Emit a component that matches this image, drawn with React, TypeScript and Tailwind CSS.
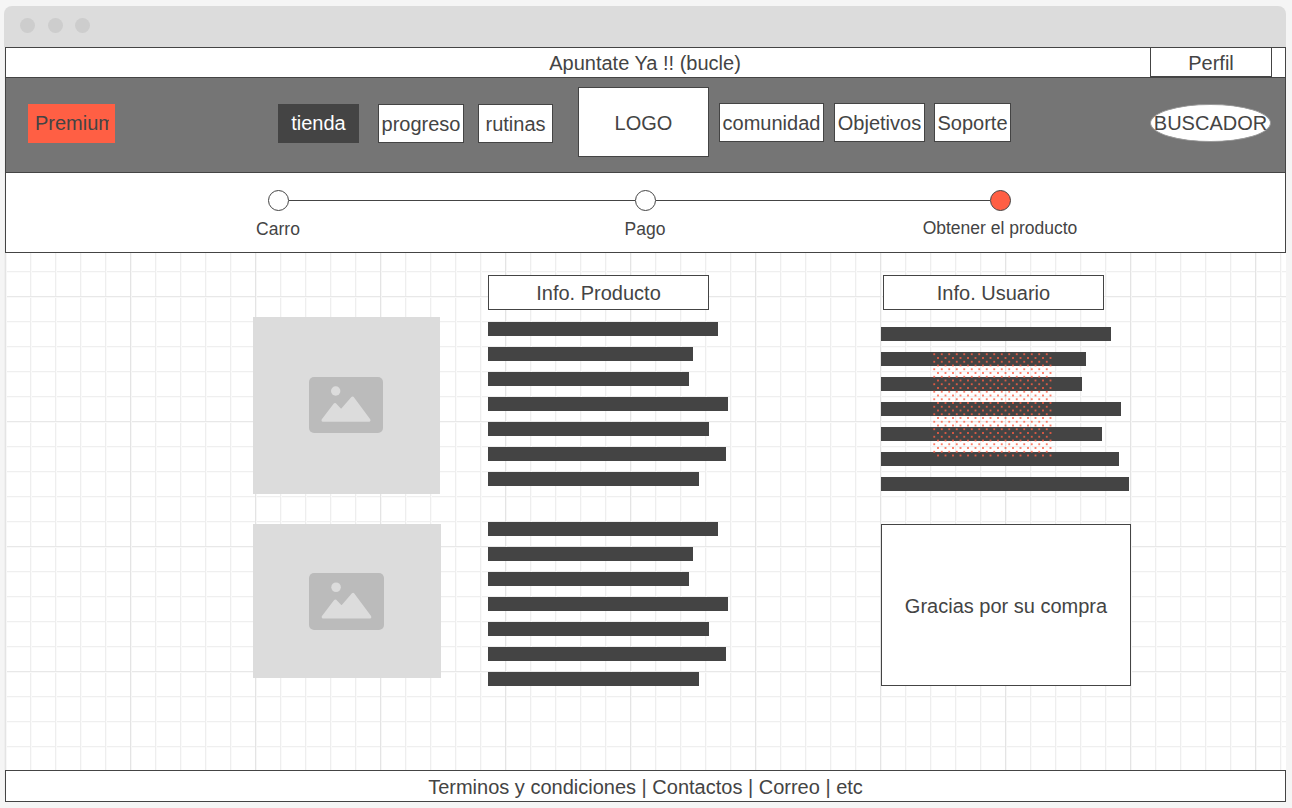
function Bars({ widths }: { widths: number[] }) {
  return (
    <div className="flex flex-col gap-[11px]">
      {widths.map((w, i) => (
        <div key={i} className="h-[14px] bg-[#444444]" style={{ width: w }} />
      ))}
    </div>
  );
}

function ImagePlaceholder({ className, iconW, iconH }: { className: string; iconW: number; iconH: number }) {
  return (
    <div className={`flex items-center justify-center bg-[#dcdcdc] ${className}`}>
      <svg width={iconW} height={iconH} viewBox="0 0 74 56" preserveAspectRatio="none">
        <rect width="74" height="56" rx="5" fill="#bbbbbb" />
        <circle cx="26.7" cy="14" r="4.7" fill="#dcdcdc" />
        <path
          d="M14 43.2 L26 27.5 L32.2 34 L43.5 21 L60 43.2 Z"
          fill="#dcdcdc"
          stroke="#dcdcdc"
          strokeWidth="3"
          strokeLinejoin="round"
        />
      </svg>
    </div>
  );
}

function NavBox({ className, children }: { className: string; children: string }) {
  return (
    <div className={`flex items-center justify-center whitespace-nowrap border border-[#444444] bg-white text-[#444444] ${className}`}>
      {children}
    </div>
  );
}

function StepDot({ active }: { active?: boolean }) {
  return (
    <div
      className={`h-[21px] w-[21px] shrink-0 rounded-full border border-[#444444] ${active ? "bg-[#ff5f44]" : "bg-white"}`}
    />
  );
}

const productBars = [230, 205, 201, 240, 221, 238, 211];
const userBars = [230, 205, 201, 240, 221, 238, 248];

export default function App() {
  return (
    <div className="h-[808px] w-[1292px] overflow-hidden bg-[#f5f5f5] pl-[4px] pt-[6px] font-['Liberation_Sans',sans-serif] text-[20px] text-[#444444]">
      <div className="h-[41px] w-[1282px] rounded-t-[8px] bg-[#dcdcdc]">
        <div className="flex gap-[12.5px] pl-[16px] pt-[12px]">
          <div className="h-[15px] w-[15px] rounded-full bg-[#cdcdcd]" />
          <div className="h-[15px] w-[15px] rounded-full bg-[#cdcdcd]" />
          <div className="h-[15px] w-[15px] rounded-full bg-[#cdcdcd]" />
        </div>
      </div>

      <div className="h-[750px] w-[1282px] rounded-b-[4px] bg-[#efefef] pl-[1px]">
        <div className="flex h-[30px] w-[1281px] items-stretch border-x border-t border-[#444444] bg-white">
          <div className="flex-1 pl-[134px] text-center leading-[30px]">Apuntate Ya !! (bucle)</div>
          <div className="mr-[13px] w-[122px] border-x border-b border-[#444444] text-center leading-[30px]">
            Perfil
          </div>
        </div>

        <div className="flex h-[95px] w-[1281px] items-center border-x border-t border-[#444444] bg-[#757575] pb-[3px]">
          <div className="ml-[22px] h-[39px] w-[87px] bg-[#ff5f44] pl-[7px] pr-[6px] leading-[39px]">
            <div className="overflow-hidden whitespace-nowrap">Premium</div>
          </div>
          <div className="ml-[163px] h-[39px] w-[81px] bg-[#444444] text-center leading-[39px] text-white">tienda</div>
          <NavBox className="ml-[19px] h-[39px] w-[86px]">progreso</NavBox>
          <NavBox className="ml-[14px] h-[39px] w-[75px]">rutinas</NavBox>
          <NavBox className="mb-[3px] ml-[25px] h-[70px] w-[131px] pt-[2px]">LOGO</NavBox>
          <NavBox className="mb-[2px] ml-[10px] h-[39px] w-[105px] pt-[1px]">comunidad</NavBox>
          <NavBox className="mb-[2px] ml-[10px] h-[39px] w-[91px] pt-[1px]">Objetivos</NavBox>
          <NavBox className="mb-[2px] ml-[9px] h-[39px] w-[77px] pt-[1px]">Soporte</NavBox>
          <div className="mb-[2px] ml-[139px] flex h-[38px] w-[121px] items-center justify-center whitespace-nowrap rounded-[50%] border border-[#999999] bg-white">
            BUSCADOR
          </div>
        </div>

        <div className="h-[81px] w-[1281px] border border-[#444444] bg-white pt-[17px] text-[17.5px]">
          <div className="ml-[262px] flex items-center">
            <StepDot />
            <div className="h-px w-[346px] bg-[#444444]" />
            <StepDot />
            <div className="h-px w-[334px] bg-[#444444]" />
            <StepDot active />
          </div>
          <div className="ml-[192px] mt-[6px] flex leading-[24px]">
            <div className="w-[160px] text-center">Carro</div>
            <div className="ml-[207px] w-[160px] text-center">Pago</div>
            <div className="ml-[195px] mt-[-1px] w-[160px] text-center">Obtener el producto</div>
          </div>
        </div>

        <div className="flex h-[517px] w-[1281px] bg-[linear-gradient(to_right,#e4e4e4_1px,#f7f7f7_1px,#f7f7f7_2px,transparent_2px),linear-gradient(to_bottom,#e8e8e8_1px,#f9f9f9_1px,#f9f9f9_2px,transparent_2px),linear-gradient(to_right,#eeeeee_1px,#fafafa_1px,#fafafa_2px,transparent_2px),linear-gradient(to_bottom,#efefef_1px,#fbfbfb_1px,#fbfbfb_2px,transparent_2px)] bg-white bg-size-[125px_125px,125px_125px,25px_25px,25px_25px] bg-position-[0_0,0_43px,0_0,0_18px]">
          <div className="ml-[248px] w-[188px] pt-[64px]">
            <ImagePlaceholder className="h-[177px] w-[187px] pb-[1px] pr-[1px]" iconW={74} iconH={56} />
            <ImagePlaceholder className="mt-[30px] h-[154px] w-[188px] pr-[1px] pt-[1px]" iconW={75} iconH={57} />
          </div>

          <div className="ml-[47px] w-[240px] pt-[22px]">
            <div className="h-[35px] w-[221px] border border-[#444444] bg-white text-center leading-[34px]">
              Info. Producto
            </div>
            <div className="mt-[12px]">
              <Bars widths={productBars} />
            </div>
            <div className="mt-[36px]">
              <Bars widths={productBars} />
            </div>
          </div>

          <div className="ml-[153px] w-[250px] pt-[22px]">
            <div className="ml-[2px] h-[35px] w-[221px] border border-[#444444] bg-white text-center leading-[34px]">
              Info. Usuario
            </div>
            <div className="relative mt-[17px]">
              <Bars widths={userBars} />
              <div className="absolute left-[51px] top-[25px] h-[105px] w-[120px] bg-[radial-gradient(circle,#ff5f44_0.7px,transparent_0.8px),radial-gradient(circle,#ff5f44_0.7px,transparent_0.8px)] bg-size-[7.5px_7.5px] bg-position-[-1.5px_-1.5px,2.25px_2.25px] opacity-80" />
            </div>
            <div className="mt-[33px] flex h-[162px] w-[250px] items-center justify-center border border-[#444444] bg-white pt-[2px]">
              Gracias por su compra
            </div>
          </div>
        </div>

        <div className="h-[32px] w-[1281px] border border-[#444444] bg-white text-center leading-[33px]">
          Terminos y condiciones | Contactos | Correo | etc
        </div>
      </div>
    </div>
  );
}
